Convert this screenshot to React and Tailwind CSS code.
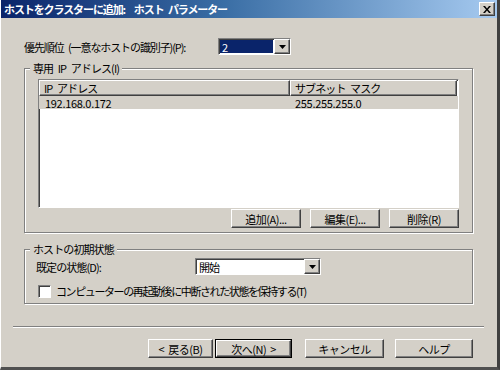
import { useState } from 'react';

// ─── Win2000 3D frames ───────────────────────────────────────────────────────

const raised =
  'border border-t-white border-l-white border-r-[#404040] border-b-[#404040] shadow-[inset_-1px_-1px_0_#808080]';
const sunken =
  'border border-t-[#808080] border-l-[#808080] border-r-white border-b-white shadow-[inset_1px_1px_0_#404040]';

function Button({ children, width = 'w-[70px]', isDefault }) {
  if (isDefault) {
    return (
      <div className={`${width} h-[19px] border border-black flex`}>
        <button
          className={`flex-1 flex items-center justify-center bg-[#D4D0C8] whitespace-nowrap tracking-[-0.5px] ${raised}`}
        >
          {children}
        </button>
      </div>
    );
  }
  return (
    <button
      className={`${width} h-[19px] flex items-center justify-center bg-[#D4D0C8] whitespace-nowrap tracking-[-0.5px] ${raised}`}
    >
      {children}
    </button>
  );
}

function ArrowBtn() {
  return (
    <div className={`w-[16px] h-full flex items-center justify-center bg-[#D4D0C8] ${raised}`}>
      <svg width="7" height="4" viewBox="0 0 7 4">
        <path d="M0 0h7L3.5 4z" fill="#000" />
      </svg>
    </div>
  );
}

function GroupBox({ label, className, children }) {
  return (
    <div
      className={`relative border border-[#808080] shadow-[inset_1px_1px_0_#fff,1px_1px_0_#fff] ${className}`}
    >
      <span className="absolute -top-[8px] left-[5px] px-[3px] bg-[#D4D0C8] leading-[14px] whitespace-nowrap">
        {label}
      </span>
      {children}
    </div>
  );
}

export default function App() {
  const [keep, setKeep] = useState(false);

  return (
    <div
      className="w-[500px] h-[370px] bg-[#D4D0C8] text-black text-[11px] leading-[14px] tracking-[-0.9px] [word-spacing:3px] overflow-hidden border-l border-l-white border-r-[3px] border-r-[#404040] border-b-[3px] border-b-[#505050] flex flex-col"
      style={{ fontFamily: '"Noto Sans CJK JP", "Liberation Sans", sans-serif' }}
    >
      {/* タイトルバー */}
      <div className="h-[18px] shrink-0 flex items-center justify-between pl-[3px] pr-[2px] bg-[linear-gradient(90deg,#0A246A_0%,#3A6EA5_45%,#A6CAF0_100%)]">
        <span className="text-white font-bold whitespace-nowrap tracking-[-1.1px]">ホストをクラスターに追加:&nbsp;&nbsp;ホスト パラメーター</span>
        <div className={`w-[16px] h-[14px] flex items-center justify-center bg-[#D4D0C8] ${raised}`}>
          <svg width="8" height="7" viewBox="0 0 8 7">
            <path d="M0 0h2l2 2.5L6 0h2L5 3.5 8 7H6L4 4.5 2 7H0l3-3.5z" fill="#000" />
          </svg>
        </div>
      </div>

      <div className="flex flex-col pl-[23px] pr-[24px]">
        {/* 優先順位 */}
        <div className="flex items-center mt-[20px] h-[17px]">
          <span className="w-[194px] whitespace-nowrap tracking-[-1.1px]">優先順位 (一意なホストの識別子)(P):</span>
          <div className={`w-[73px] h-[17px] flex bg-white ${sunken}`}>
            <div className="flex-1 m-[1px] bg-[#0A246A] text-white pl-[2px] flex items-center">2</div>
            <ArrowBtn />
          </div>
        </div>

        {/* 専用 IP アドレス */}
        <GroupBox label="専用 IP アドレス(I)" className="mt-[13px] h-[165px] pt-[10px] pl-[13px] pr-[13px]">
          <div className={`h-[129px] bg-white flex flex-col ${sunken}`}>
            <div className="flex h-[16px] shrink-0">
              <div className={`w-[251px] bg-[#D4D0C8] pl-[4px] flex items-center ${raised}`}>IP アドレス</div>
              <div className={`w-[167px] bg-[#D4D0C8] pl-[4px] flex items-center ${raised}`}>サブネット マスク</div>
            </div>
            <div className="flex h-[13px] bg-[#D4D0C8] items-center tracking-[-0.3px]">
              <span className="w-[251px] pl-[6px]">192.168.0.172</span>
              <span className="pl-[5px]">255.255.255.0</span>
            </div>
          </div>
          <div className="flex justify-end gap-[9px] mt-[1px]">
            <Button>追加(A)...</Button>
            <Button>編集(E)...</Button>
            <Button>削除(R)</Button>
          </div>
        </GroupBox>

        {/* ホストの初期状態 */}
        <GroupBox label="ホストの初期状態" className="mt-[16px] h-[55px] pt-[8px] pl-[11px]">
          <div className="flex items-center h-[17px]">
            <span className="w-[159px] whitespace-nowrap">既定の状態(D):</span>
            <div className={`w-[126px] h-[17px] flex bg-white ${sunken}`}>
              <div className="flex-1 pl-[3px] flex items-center">開始</div>
              <ArrowBtn />
            </div>
          </div>
          <label className="flex items-center mt-[9px] ml-[2px] whitespace-nowrap tracking-[-1.4px]">
            <span
              onClick={() => setKeep(!keep)}
              className={`w-[13px] h-[13px] bg-white mr-[5px] ${sunken}`}
            />
            コンピューターの再起動後に中断された状態を保持する(T)
          </label>
        </GroupBox>

        {/* 区切り線 */}
        <div className="mt-[22px] -ml-[11px] w-[471px] h-[2px] border-t border-t-[#808080] border-b border-b-white" />

        {/* ボタン */}
        <div className="flex mt-[11px] pl-[124px]">
          <Button width="w-[77px]">
            <span className="mr-[4px]">&lt;</span>戻る(B)
          </Button>
          <div className="ml-[2px]">
            <Button width="w-[77px]" isDefault>
              次へ(N)<span className="ml-[4px]">&gt;</span>
            </Button>
          </div>
          <div className="ml-[13px]">
            <Button width="w-[79px]">キャンセル</Button>
          </div>
          <div className="ml-[11px]">
            <Button width="w-[78px]">ヘルプ</Button>
          </div>
        </div>
      </div>
    </div>
  );
}
